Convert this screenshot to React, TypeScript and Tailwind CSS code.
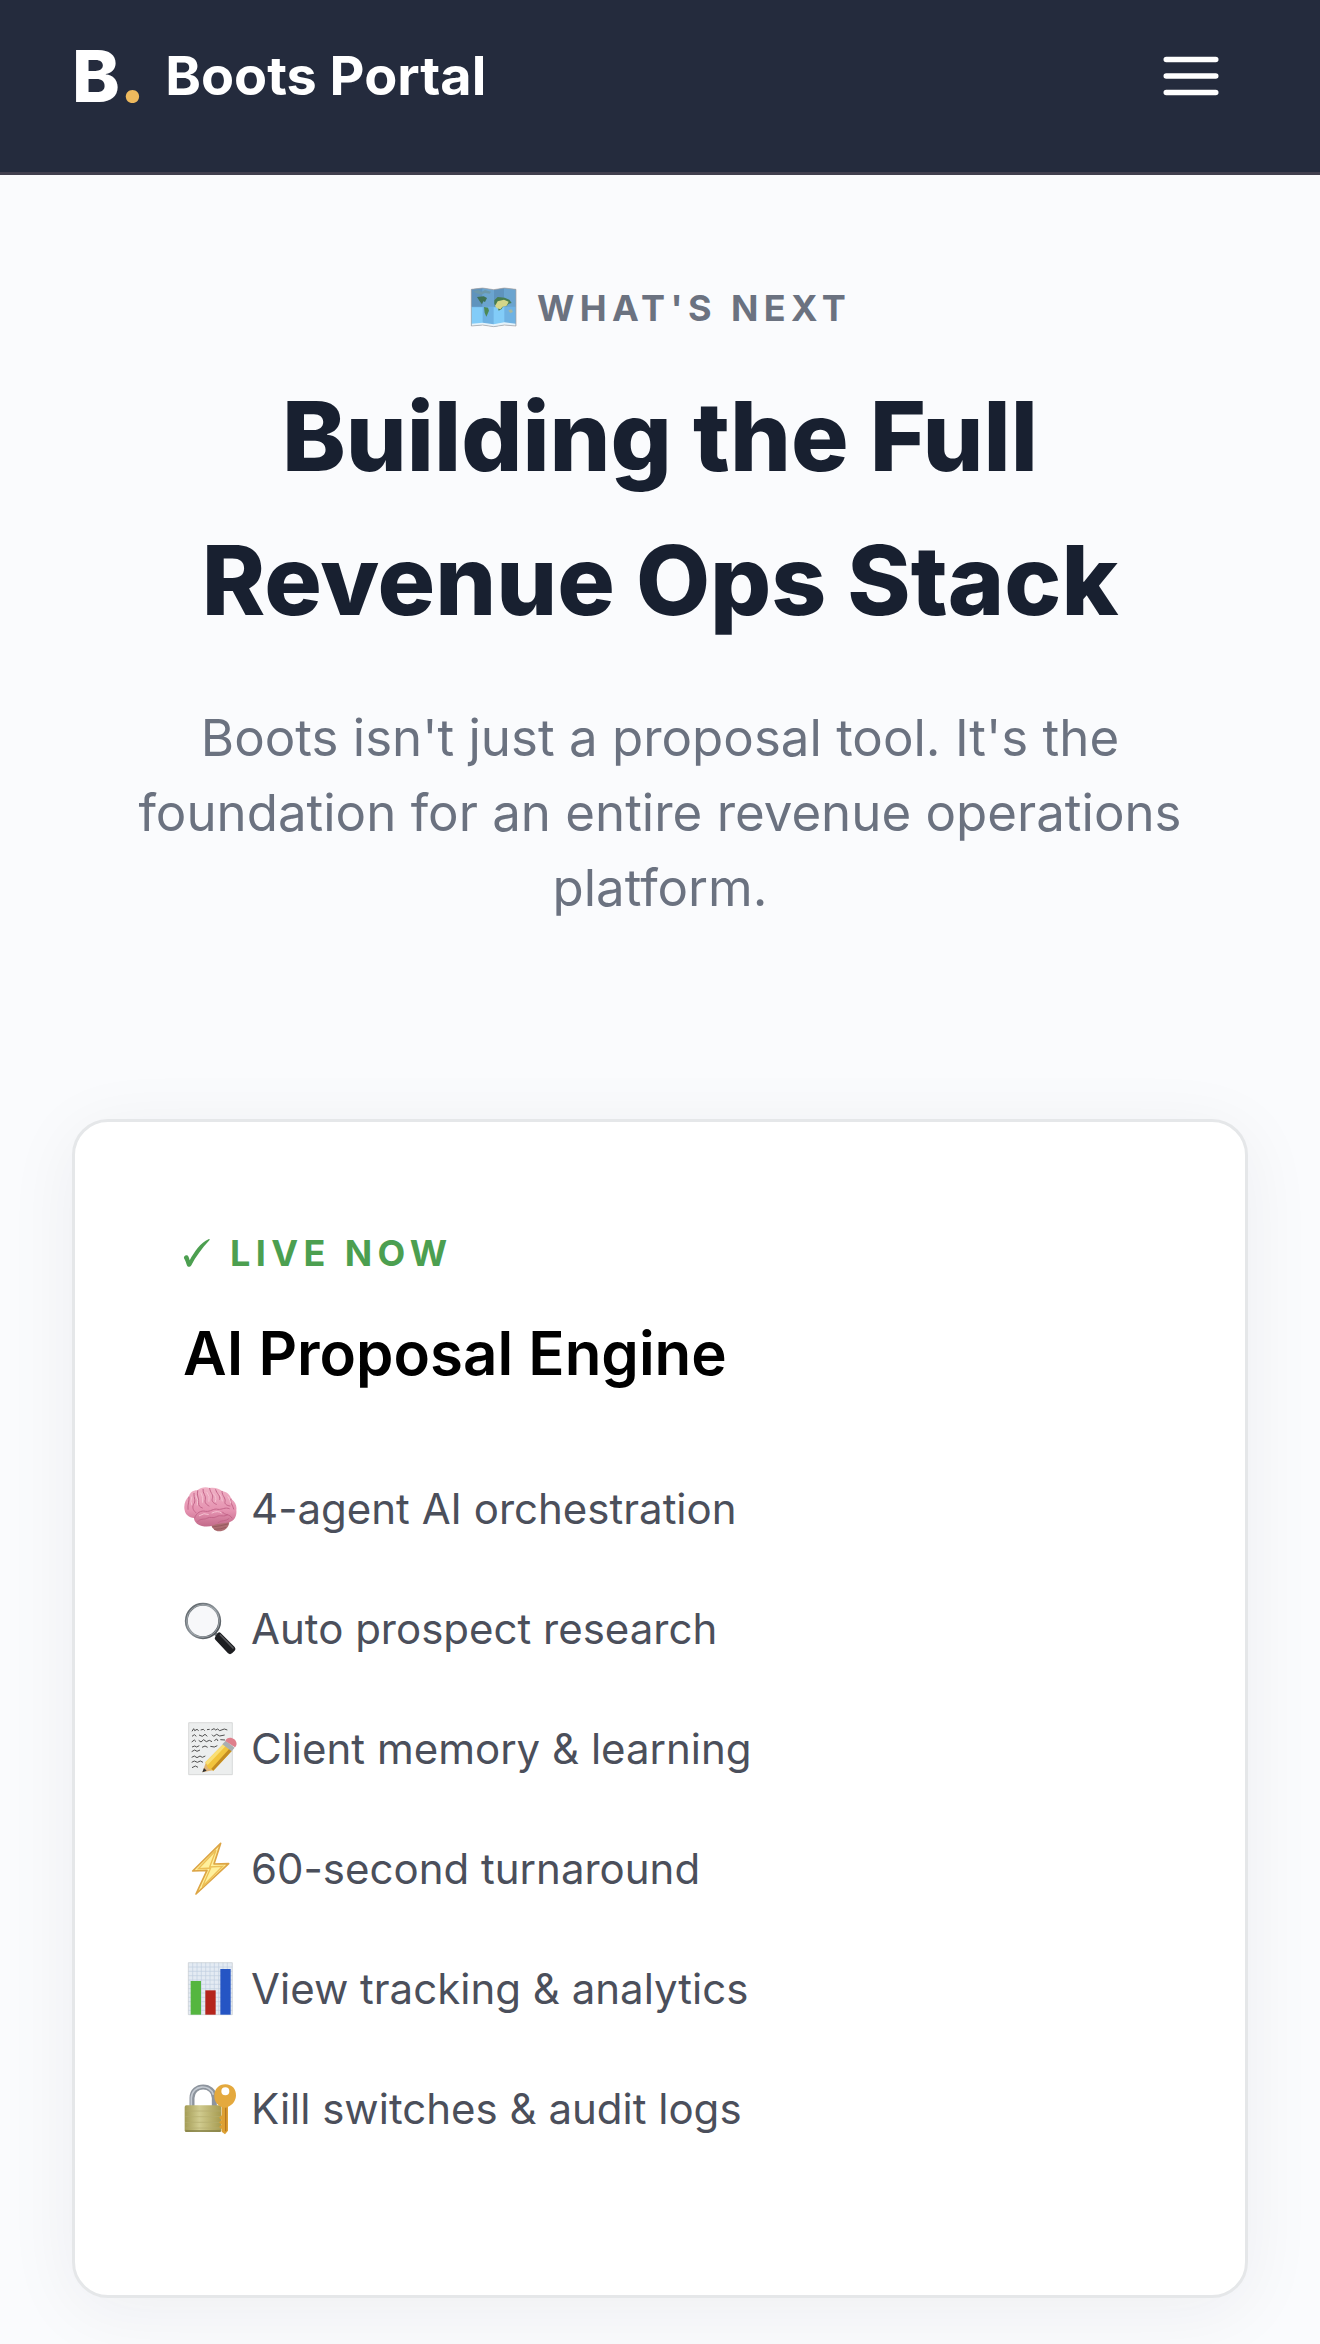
import React, { useState } from 'react';

const MapIcon = () => (
  <svg viewBox="84 84 144 126" className="w-12 h-[42px]" aria-hidden="true">
    <path d="M91 91l34-4 33 5 32-5 35 4v110l-35-3-32 5-33-5-34 3z" fill="#6fb2e3" />
    <path d="M91 91l34-4v56H91zM158 92l32-5v56h-32z" fill="#5f93bd" />
    <path d="M125 87l33 5v51h-33zM190 87l35 4v52h-35z" fill="#6ba4cf" />
    <path d="M91 145h34v53l-34 3zM158 145h32v53l-32 5z" fill="#82ccf8" />
    <path d="M96 97l17-4 8 6 11-6 18 5-4 6-14-2-11 5-16-5z" fill="#6b98ab" />
    <path d="M108 114l20-2 10 5-6 12-5-2-4 9-7-9z" fill="#3f7254" />
    <path d="M129 144l12 2 3 9-8 18-5-12z" fill="#4d8955" />
    <path d="M160 124l10-10 21 2 14 6 7 10-9 2-7 8-8-4-6 12-9 5-4-14-9-5z" fill="#477d50" />
    <path d="M162 141l8-14 19-5 14 6-6 12-12 3-7 8-10-3z" fill="#d3d68a" />
    <path d="M202 155l9-5 5 8-7 5z" fill="#a5b7a0" />
    <path d="M92 194l33-3 33 5 32-6 34 4v7l-34-3-32 5-33-5-33 3z" fill="#e5f3fb" />
    <path d="M91 91l34-4 33 5 32-5 35 4v110l-35-3-32 5-33-5-34 3z" fill="none" stroke="#a99f9b" strokeWidth="2" />
  </svg>
);

const CheckIcon = () => (
  <svg viewBox="0 0 27 30" className="w-[27px] h-[30px]" fill="currentColor" aria-hidden="true">
    <path d="M25.5 1.2C26.5.8 27 1.4 26.4 2.2C19 10 12.500 19 8.200 27.500C7.400 29 4.700 29.400 4 27.600C3.200 25 2.400 22.500 1 20.200C.4 18.300 2.500 16.600 4.200 17.300C5.600 18 6.100 20.200 6.700 22.200C11.200 14 17.800 4.200 25.500 1.200z" />
  </svg>
);

const BrainIcon = () => (
  <svg viewBox="39 39 162 162" className="size-[54px]" aria-hidden="true">
    <defs>
      <linearGradient id="brain" x1="0" y1="0" x2="0" y2="1">
        <stop offset="0" stopColor="#f0b1c5" />
        <stop offset="0.6" stopColor="#e592b0" />
        <stop offset="1" stopColor="#c26a8a" />
      </linearGradient>
    </defs>
    <path d="M121 163c18-8 46-8 57-3-2 16-14 27-31 27-13 0-21-10-26-24z" fill="#ad6d72" />
    <path d="M126 174q25-3 48-9M132 181q20 0 36-6" fill="none" stroke="#8e5059" strokeWidth="2" />
    <path d="M44 124c-4-17 3-34 13-42 3-13 15-19 25-18 10-9 25-11 37-7 15-3 29 2 37 9 15 2 25 13 28 24 12 8 17 21 15 33 2 16-5 32-19 36-17 6-34 3-49 10-17 6-35 5-50-5-6-5-9-11-9-17-15-1-26-10-28-23z" fill="url(#brain)" />
    <g fill="none" stroke="#c4668a" strokeWidth="3" strokeLinecap="round">
      <path d="M57 84c2 13-5 21-3 37M72 73c-1 15 7 23-2 34-4 10 1 20 8 24" />
      <path d="M83 65c-4 15 5 24 3 36-1 9 4 14 11 16M99 61c-2 12 10 18 7 31-3 9 3 15 11 19" />
      <path d="M119 58c1 14 13 18 8 31-3 8 4 14 12 17M137 62c3 13 15 17 12 29" />
      <path d="M156 67c0 14 12 20 9 31-2 8 7 12 15 13M183 90c-4 10 5 18 8 30" />
      <path d="M74 147c4-15 19-24 33-20 15 2 23-10 37-6 11 2 22-8 34-2" />
      <path d="M83 158c8-11 18-5 27-10 12-7 19 2 30-5 10-7 22 3 33-6M157 129c8 11 22 5 29 18M144 161c12-9 23-3 33-12" />
    </g>
    <g fill="none" stroke="#f5c3d2" strokeWidth="3" strokeLinecap="round">
      <path d="M65 84q-5 13 0 24M78 80q9 14 4 28M93 72q8 14 5 28M111 70q10 12 6 27M130 74q12 11 6 24M149 75q8 9 8 21M174 83q8 12 8 19" />
      <path d="M88 140q14-10 27-4M126 132q18-9 28 0" />
    </g>
  </svg>
);

const SearchIcon = () => (
  <svg viewBox="39 39 162 162" className="size-[54px]" aria-hidden="true">
    <defs>
      <linearGradient id="rim" x1="0" y1="0" x2="1" y2="1">
        <stop offset="0" stopColor="#565d62" />
        <stop offset="0.5" stopColor="#8c9399" />
        <stop offset="1" stopColor="#3d4247" />
      </linearGradient>
    </defs>
    <path d="M134 132l14 14" stroke="#74797d" strokeWidth="10" />
    <circle cx="99" cy="96" r="50" fill="#f7f8fa" stroke="url(#rim)" strokeWidth="9" />
    <circle cx="99" cy="96" r="49" fill="none" stroke="#b8bec2" strokeWidth="2" />
    <path d="M143 132q5-4 9 0l42 42q5 6 0 11l-8 8q-6 5-12 0l-38-41q-4-5 0-9z" fill="#1d1e21" />
    <path d="M151 138l38 39" stroke="#55565a" strokeWidth="5" strokeLinecap="round" />
  </svg>
);

const MemoIcon = () => (
  <svg viewBox="39 39 162 162" className="size-[54px]" aria-hidden="true">
    <path d="M56 41h131v156H56z" fill="#eceeee" stroke="#c9cccc" strokeWidth="2" />
    <g fill="none" stroke="#505050" strokeWidth="3">
      <path d="M66 67l5-8 3 6 7-4 5 4m6-2l8-2 4 4m7-3l8-1m5 2l8-4 5 4 6-3 6 5 14-5 9 3" />
      <path d="M66 82l7-5 6 5m8-4l10 4 8-6 7 6m14-5l5 5 9-6 9 5 15-3" />
      <path d="M65 99l8-6 5 5m8-4l7 5 8-7 8 6 9-4 8 4m7-3l7-5 4 6m7-4l14 1" />
      <path d="M66 114l8-3 6 3 8-4m8 5l9-4 8 4m8-3l12 2 9-4" />
      <path d="M65 128l9-5 7 4 9-4M65 145l8-4 8 5 9-5 7 4 9-4M65 160l8-4 9 4 9-4 8 4M66 176l10-5 8 4" />
    </g>
    <path d="M97 190l10-28 22 22z" fill="#dfb477" />
    <path d="M97 190l5-13 8 8z" fill="#303033" />
    <path d="M106 160l54-55 26 20-56 60-16-7z" fill="#f1c43d" />
    <path d="M106 160l54-55 7 6-54 57z" fill="#f9df76" />
    <path d="M124 179l54-60 8 6-56 60z" fill="#c38c22" />
    <path d="M157 106l10-11 27 21-9 11z" fill="#a9afb1" />
    <path d="M166 96c4-11 17-13 27-5 8 8 9 17 2 24z" fill="#df7f8c" />
  </svg>
);

const BoltIcon = () => (
  <svg viewBox="39 39 162 162" className="size-[54px]" aria-hidden="true">
    <path d="M152 43L68 126l43-2-33 71 98-91-44 1z" fill="#fff09c" stroke="#dda545" strokeWidth="5" strokeLinejoin="round" />
    <path d="M138 64l-53 55 37-2-25 56 61-61-39 2z" fill="none" stroke="#edbf55" strokeWidth="4" />
  </svg>
);

const ChartIcon = () => (
  <svg viewBox="39 39 162 162" className="size-[54px]" aria-hidden="true">
    <path d="M55 41h132v156H55z" fill="#e4ebf3" />
    <path
      d="M55 54h132M55 67h132M55 80h132M55 93h132M55 106h132M55 119h132M55 132h132M55 145h132M55 158h132M55 171h132M55 184h132M68 41v156M81 41v156M94 41v156M107 41v156M120 41v156M133 41v156M146 41v156M159 41v156M172 41v156"
      stroke="#bfcfdf"
      strokeWidth="2"
    />
    <path d="M55 41h132v156H55z" fill="none" stroke="#c3c9cf" strokeWidth="2" />
    <path d="M62 96h31v101H62z" fill="#55b63f" />
    <path d="M106 124h31v73h-31z" fill="#b5251c" />
    <path d="M151 60h31v137h-31z" fill="#2555c4" />
  </svg>
);

const LockIcon = () => (
  <svg viewBox="39 39 162 162" className="size-[54px]" aria-hidden="true">
    <defs>
      <linearGradient id="brass" x1="0" y1="0" x2="1" y2="0">
        <stop offset="0" stopColor="#a49c55" />
        <stop offset="0.4" stopColor="#d0cb8f" />
        <stop offset="1" stopColor="#a69b50" />
      </linearGradient>
    </defs>
    <path d="M66 113V87c0-44 67-44 67 0v26" fill="none" stroke="#8d949d" strokeWidth="15" />
    <path d="M64 111V87c2-40 56-44 66-10" fill="none" stroke="#c4cad2" strokeWidth="5" />
    <rect x="44" y="109" width="110" height="80" rx="5" fill="url(#brass)" />
    <path d="M46 126h106M46 143h106M46 160h106M46 177h106" stroke="#b5ae70" strokeWidth="2" />
    <path d="M46 186h106" stroke="#858047" strokeWidth="5" />
    <path d="M155 108h19v77l-9 11-10-8v-8l-8-6 8-7-8-7 8-7-8-7 8-7z" fill="#dda033" />
    <path d="M167 115v72" stroke="#b97820" strokeWidth="4" />
    <path fillRule="evenodd" d="M166 46c21 0 33 15 32 34-1 18-15 33-33 36-20-2-33-18-32-36 0-20 14-34 33-34zm0 9a12 12 0 1 0 0 24 12 12 0 0 0 0-24z" fill="#e4a93e" />
  </svg>
);

const Navbar = () => {
  const [menuOpen, setMenuOpen] = useState(false);

  return (
    <header className="bg-[#242b3d] border-b-3 border-[#413f4e] px-[72px] pt-[33px] pb-[53px]">
      <div className="flex items-center justify-between">
        <a href="#" className="flex items-center gap-5 text-white">
          <span className="text-7xl leading-[86px] font-extrabold">
            B<span className="text-[#edb95e]">.</span>
          </span>
          <span className="text-[54px] leading-[84px] font-bold">Boots Portal</span>
        </a>
        <button
          type="button"
          aria-label="Menu"
          aria-expanded={menuOpen}
          onClick={() => setMenuOpen(!menuOpen)}
          className="px-6 text-white cursor-pointer"
        >
          <svg viewBox="0 0 24 24" className="size-[66px]" fill="none" stroke="currentColor" strokeWidth="2" strokeLinecap="round">
            <path d="M3 6h18M3 12h18M3 18h18" />
          </svg>
        </button>
      </div>
    </header>
  );
};

const features = [
  { icon: <BrainIcon />, label: '4-agent AI orchestration' },
  { icon: <SearchIcon />, label: 'Auto prospect research' },
  { icon: <MemoIcon />, label: 'Client memory & learning' },
  { icon: <BoltIcon />, label: '60-second turnaround' },
  { icon: <ChartIcon />, label: 'View tracking & analytics' },
  { icon: <LockIcon />, label: 'Kill switches & audit logs' },
];

const App = () => {
  return (
    <div className="min-h-screen bg-[#fafbfd] font-['Inter',sans-serif]">
      <Navbar />

      <main className="px-[72px] pt-[106px] pb-[46px]">
        <section className="text-center mb-[194px]">
          <p className="flex items-center justify-center gap-5 mb-[29px] text-4xl leading-[54px] font-bold tracking-[0.15em] text-[#6b7280]">
            <MapIcon />
            WHAT'S NEXT
          </p>
          <h1 className="text-8xl leading-36 font-extrabold text-[#182030] max-w-[1000px] mx-auto mb-12">
            Building the Full Revenue Ops Stack
          </h1>
          <p className="text-[51px] leading-[75px] text-[#6b7280] max-w-[1100px] mx-auto">
            Boots isn't just a proposal tool. It's the foundation for an entire
            revenue operations platform.
          </p>
        </section>

        <section className="bg-white border-3 border-[#e5e7e9] rounded-[36px] px-27 pt-[104px] pb-[126px] shadow-[0_12px_72px_rgba(26,32,53,0.06)]">
          <p className="flex items-center gap-5 mb-7 text-4xl leading-[54px] font-bold tracking-[0.15em] text-[#4c9f50]">
            <CheckIcon />
            LIVE NOW
          </p>
          <h2 className="mb-[51px] text-6xl leading-[90px] font-semibold text-black">
            AI Proposal Engine
          </h2>
          <ul>
            {features.map((feature) => (
              <li
                key={feature.label}
                className="flex items-center gap-[14px] py-6 text-[42px] leading-[72px] text-[#4b4f5b]"
              >
                {feature.icon}
                {feature.label}
              </li>
            ))}
          </ul>
        </section>
      </main>
    </div>
  );
};

export default App;
